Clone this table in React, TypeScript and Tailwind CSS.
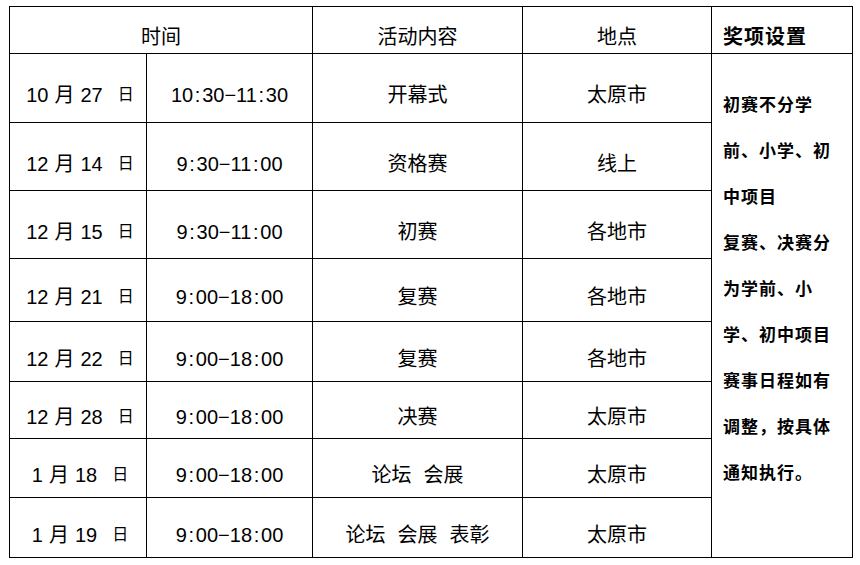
import React from 'react'

type Row = { month: string; day: string; time: string; activity: string[]; place: string }

const rows: Row[] = [
  { month: '10', day: '27', time: '10:30-11:30', activity: ['开幕式'], place: '太原市' },
  { month: '12', day: '14', time: '9:30-11:00', activity: ['资格赛'], place: '线上' },
  { month: '12', day: '15', time: '9:30-11:00', activity: ['初赛'], place: '各地市' },
  { month: '12', day: '21', time: '9:00-18:00', activity: ['复赛'], place: '各地市' },
  { month: '12', day: '22', time: '9:00-18:00', activity: ['复赛'], place: '各地市' },
  { month: '12', day: '28', time: '9:00-18:00', activity: ['决赛'], place: '太原市' },
  { month: '1', day: '18', time: '9:00-18:00', activity: ['论坛', '会展'], place: '太原市' },
  { month: '1', day: '19', time: '9:00-18:00', activity: ['论坛', '会展', '表彰'], place: '太原市' },
]

const awardLines = [
  '初赛不分学',
  '前、小学、初',
  '中项目',
  '复赛、决赛分',
  '为学前、小',
  '学、初中项目',
  '赛事日程如有',
  '调整，按具体',
  '通知执行。',
]

const cell = 'bg-white flex items-center justify-center pt-[14px] text-[20px] text-black'

// colons sit in their own half-width slot, the dash is a long minus
function TimeText({ value }: { value: string }) {
  return (
    <span className="whitespace-nowrap">
      {value.split('').map((ch, i) =>
        ch === ':' ? (
          <span key={i} className="inline-block w-[9px] text-center">
            :
          </span>
        ) : ch === '-' ? (
          <span key={i}>−</span>
        ) : (
          <span key={i}>{ch}</span>
        )
      )}
    </span>
  )
}

export default function App() {
  return (
    <div className="w-[860px] h-[565px] bg-white pl-[9px] pt-[6px] font-['Liberation_Sans','Noto_Sans_CJK_SC',sans-serif]">
      <div className="grid w-[844px] gap-px bg-black p-px grid-cols-[136px_165px_209px_188px_140px] grid-rows-[46px_68px_67px_67px_62px_59px_56px_58px_59px]">
        {/* Header */}
        <div className={`${cell} col-span-2`}>时间</div>
        <div className={cell}>活动内容</div>
        <div className={cell}>地点</div>
        <div className="bg-white flex items-center pt-[14px] pl-[11px] text-[20px] font-bold tracking-[1px] text-black">
          奖项设置
        </div>

        {rows.map((r, i) => (
          <React.Fragment key={i}>
            <div className={`${cell} pl-[4px]`}>
              <span>{r.month}</span>
              <span className="ml-[6px]">月</span>
              <span className="ml-[6px]">{r.day}</span>
              <span className="ml-[15px] text-[16px]">日</span>
            </div>
            <div className={cell}>
              <TimeText value={r.time} />
            </div>
            <div className={`${cell} gap-[12px]`}>
              {r.activity.map((a) => (
                <span key={a}>{a}</span>
              ))}
            </div>
            <div className={cell}>{r.place}</div>
            {i === 0 && (
              <div className="row-span-8 bg-white pt-[29px] pl-[11px] text-[17px] font-bold leading-[46px] tracking-[1px] text-black">
                {awardLines.map((l) => (
                  <div key={l} className="whitespace-nowrap">
                    {l}
                  </div>
                ))}
              </div>
            )}
          </React.Fragment>
        ))}
      </div>
    </div>
  )
}
